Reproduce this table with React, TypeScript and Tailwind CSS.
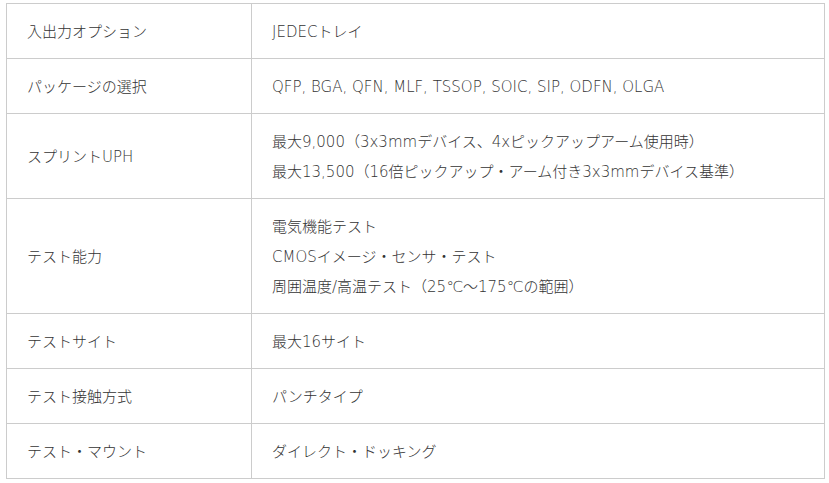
import React from "react";

const rows: { label: string; values: string[] }[] = [
  { label: "入出力オプション", values: ["JEDECトレイ"] },
  { label: "パッケージの選択", values: ["QFP, BGA, QFN, MLF, TSSOP, SOIC, SIP, ODFN, OLGA"] },
  {
    label: "スプリントUPH",
    values: [
      "最大9,000（3x3mmデバイス、4xピックアップアーム使用時）",
      "最大13,500（16倍ピックアップ・アーム付き3x3mmデバイス基準）",
    ],
  },
  {
    label: "テスト能力",
    values: ["電気機能テスト", "CMOSイメージ・センサ・テスト", "周囲温度/高温テスト（25℃～175℃の範囲）"],
  },
  { label: "テストサイト", values: ["最大16サイト"] },
  { label: "テスト接触方式", values: ["パンチタイプ"] },
  { label: "テスト・マウント", values: ["ダイレクト・ドッキング"] },
];

export default function App() {
  return (
    <div
      className="w-[829px] h-[483px] bg-white pl-[6px] pt-[3px] text-[#333] font-light"
      style={{ fontFamily: '"DejaVu Sans", "Noto Sans CJK JP", sans-serif' }}
    >
      <table className="w-[819px] border-collapse text-[15px] leading-[30px]">
        <tbody>
          {rows.map((r) => (
            <tr key={r.label}>
              <td className="w-[245px] border border-[#cccccc] pl-[20px] pr-3 pt-[13px] pb-[11px] align-middle">{r.label}</td>
              <td className="border border-[#cccccc] pl-[20px] pr-3 pt-[13px] pb-[11px] align-middle">
                {r.values.map((v) => (
                  <div key={v}>{v}</div>
                ))}
              </td>
            </tr>
          ))}
        </tbody>
      </table>
    </div>
  );
}
